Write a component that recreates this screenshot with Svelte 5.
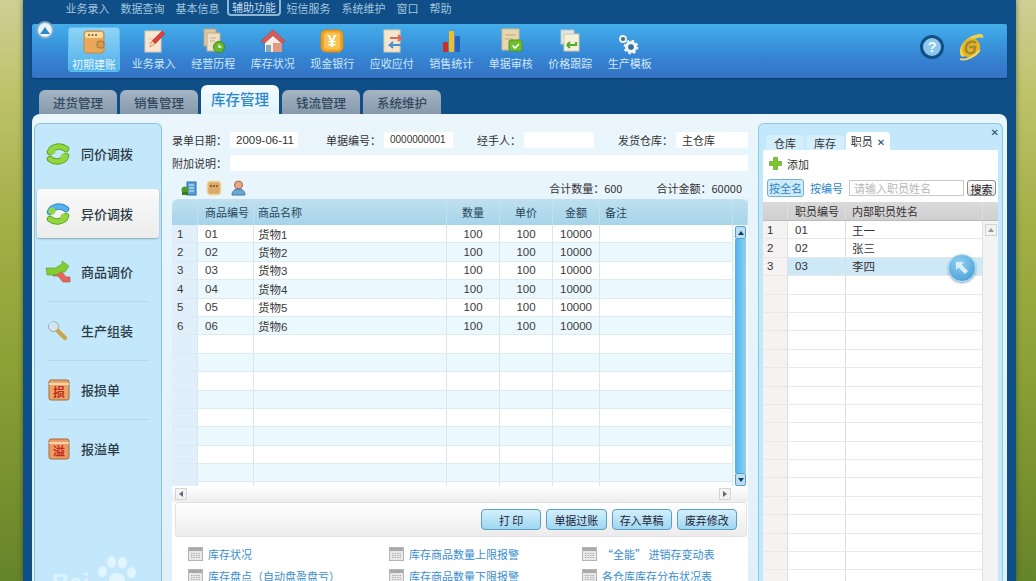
<script lang="ts">
  const menus = ['业务录入', '数据查询', '基本信息', '辅助功能', '短信服务', '系统维护', '窗口', '帮助'];
  const tools = [
    { label: '初期建账', icon: 'book' },
    { label: '业务录入', icon: 'pen' },
    { label: '经营历程', icon: 'clock' },
    { label: '库存状况', icon: 'house' },
    { label: '现金银行', icon: 'cash' },
    { label: '应收应付', icon: 'swap' },
    { label: '销售统计', icon: 'bars' },
    { label: '单据审核', icon: 'check' },
    { label: '价格跟踪', icon: 'track' },
    { label: '生产模板', icon: 'gears' }
  ];
  const tabs = ['进货管理', '销售管理', '库存管理', '钱流管理', '系统维护'];
  const navs = [
    { label: '同价调拨', icon: 'same' },
    { label: '异价调拨', icon: 'diff' },
    { label: '商品调价', icon: 'price' },
    { label: '生产组装', icon: 'wrench' },
    { label: '报损单', icon: 'loss' },
    { label: '报溢单', icon: 'over' }
  ];
  const goods = [1, 2, 3, 4, 5, 6].map((n) => ({ n, code: '0' + n, name: '货物' + n }));
  const blanks = Array.from({ length: 9 });
  const staff = [
    { n: 1, code: '01', name: '王一' },
    { n: 2, code: '02', name: '张三' },
    { n: 3, code: '03', name: '李四' }
  ];
  const staffBlanks = Array.from({ length: 17 });
  const actions = ['打 印', '单据过账', '存入草稿', '废弃修改'];
  const links = [
    ['库存状况', '库存盘点（自动盘盈盘亏）'],
    ['库存商品数量上限报警', '库存商品数量下限报警'],
    ['“全能” 进销存变动表', '各仓库库存分布状况表']
  ];
</script>

{#snippet toolIcon(name)}
  <svg width="30" height="28" viewBox="0 0 30 28">
    {#if name === 'book'}
      <rect x="5" y="3" width="20" height="22" rx="3" fill="#eaa85c" stroke="#c58a45" />
      <rect x="6" y="4" width="18" height="6" rx="2" fill="#fbdca0" />
      <circle cx="10" cy="7" r="1" fill="#7a5527" /><circle cx="13.500" cy="7" r="1" fill="#7a5527" /><circle cx="17" cy="7" r="1" fill="#7a5527" />
      <rect x="18" y="13" width="7" height="7" rx="2.500" fill="#d59a52" stroke="#a87232" />
    {:else if name === 'pen'}
      <rect x="6" y="4" width="16" height="21" fill="#f9e6d2" stroke="#e2caa8" />
      <path d="M9 12h8M9 16h5" stroke="#e0c4ae" />
      <path d="M11 20l2-6L23 4l3 3-10 10z" fill="#dc4438" stroke="#b02f26" stroke-width=".5" />
      <path d="M11 20l2-6 3 3z" fill="#f5d9a8" />
    {:else if name === 'clock'}
      <rect x="6" y="2" width="12" height="17" fill="#dcc8a4" stroke="#b9a583" />
      <rect x="9" y="6" width="13" height="18" fill="#efdfc4" stroke="#c4ad8a" />
      <path d="M12 11h6M12 14h5" stroke="#c7b08c" />
      <circle cx="21" cy="20" r="5.500" fill="#6ab832" stroke="#3f8a18" />
      <path d="M21 17.500V20h2.500" stroke="#eefbe0" stroke-width="1.300" fill="none" />
    {:else if name === 'house'}
      <path d="M15 3L3 14l3 2.500 9-8 9 8 3-2.500z" fill="#dd5a52" stroke="#b83d35" stroke-width=".6" />
      <path d="M7 16l8-7 8 7v9H7z" fill="#f7ece0" />
      <rect x="8" y="18" width="5" height="7" fill="#8fa6b8" />
      <rect x="15" y="16" width="9" height="9" fill="#e09a84" />
    {:else if name === 'cash'}
      <rect x="4" y="3" width="22" height="22" rx="5" fill="#f0a226" stroke="#d58a1a" />
      <rect x="7" y="5.500" width="16" height="17" rx="3" fill="#fac24f" />
      <text x="15" y="20" text-anchor="middle" class="svg-glyph" fill="#fff">¥</text>
    {:else if name === 'swap'}
      <rect x="7" y="3" width="16" height="22" fill="#f3e6cc" stroke="#ddcba6" />
      <path d="M13 11h11l-3-3M24 11l-3 3" stroke="#d9685c" stroke-width="2" fill="none" />
      <path d="M24 18H13l3-3M13 18l3 3" stroke="#4d8ed0" stroke-width="2" fill="none" />
    {:else if name === 'bars'}
      <rect x="7" y="15" width="5" height="10" rx="1" fill="#c9302a" />
      <rect x="13" y="4" width="5" height="21" rx="1" fill="#f2bd2c" />
      <rect x="19" y="9" width="5" height="16" rx="1" fill="#2b62b8" />
    {:else if name === 'check'}
      <rect x="6" y="2" width="17" height="21" fill="#e9d6ae" stroke="#cdb98e" />
      <path d="M9 8h11M9 12h8" stroke="#bda97f" />
      <rect x="13" y="13" width="13" height="11" rx="2" fill="#6fbf2c" stroke="#4c9a1c" />
      <path d="M16.500 18.500l2.500 2.500 4-4" stroke="#fff" stroke-width="1.600" fill="none" />
    {:else if name === 'track'}
      <rect x="6" y="3" width="13" height="14" fill="#dfe7e4" stroke="#b8c7c4" />
      <rect x="9" y="7" width="15" height="17" fill="#f3f0dc" stroke="#cfc8a8" />
      <path d="M21 15v3h-9M12 18l3-3M12 18l3 3" stroke="#57ad2c" stroke-width="2.200" fill="none" />
    {:else if name === 'gears'}
      <circle cx="8" cy="12" r="3" fill="#53697a" stroke="#eef2f5" stroke-width="1.800" />
      <circle cx="16" cy="20" r="4.400" fill="none" stroke="#f2f5f7" stroke-width="3.200" />
      <circle cx="16" cy="20" r="6.400" fill="none" stroke="#f2f5f7" stroke-width="2" stroke-dasharray="2.500 2.500" />
      <circle cx="16" cy="20" r="2.600" fill="#3f6c8c" />
    {/if}
  </svg>
{/snippet}

{#snippet navIcon(name)}
  <svg width="26" height="26" viewBox="0 0 26 26">
    {#if name === 'same' || name === 'diff'}
      <path d="M5 11C7 5 16 4 21 8" fill="none" stroke={name === 'diff' ? '#2f8ed2' : '#5aa821'} stroke-width="6.500" stroke-linecap="round" />
      <path d="M5 11C7 5 16 4 21 8" fill="none" stroke={name === 'diff' ? '#56b4ec' : '#93d640'} stroke-width="4.500" stroke-linecap="round" />
      <path d="M21 15C19 21 10 22 5 18" fill="none" stroke="#5aa821" stroke-width="6.500" stroke-linecap="round" />
      <path d="M21 15C19 21 10 22 5 18" fill="none" stroke="#93d640" stroke-width="4.500" stroke-linecap="round" />
      <circle cx="7" cy="10" r="3.500" fill="#93d640" />
      <circle cx="19" cy="16" r="3.500" fill="#93d640" />
    {:else if name === 'price'}
      <path d="M8 15h8l5 6h4v5h-7l-5-6H8z" transform="translate(0 -3)" fill="#e5675a" stroke="#b8443a" stroke-width=".6" />
      <path d="M1 9h9l7-4V2l7 5-4 6h-4l-5 3H2z" fill="#84cc33" stroke="#56a01b" stroke-width=".6" />
    {:else if name === 'wrench'}
      <path d="M11 11l9 9" stroke="#cca64e" stroke-width="4.500" stroke-linecap="round" />
      <circle cx="8.500" cy="8.500" r="5" fill="#dfe4e8" stroke="#98a4ae" />
      <path d="M7 3l3.500 4.500-2.500 2.500-4.500-3.500z" fill="#c4e8fb" />
    {:else}
      <rect x="4" y="3" width="20" height="20" rx="2" fill={name === 'loss' ? '#eca467' : '#ee9a63'} stroke="#a06a3a" />
      <path d="M4 7h20" stroke="#fbe6c5" stroke-width="1.500" />
      <text x="14" y="20" text-anchor="middle" class="svg-char" fill="#c02b1d">{name === 'loss' ? '损' : '溢'}</text>
    {/if}
  </svg>
{/snippet}

{#snippet calIcon()}
  <svg width="15" height="14" viewBox="0 0 15 14">
    <rect x=".5" y=".5" width="14" height="13" fill="#e8e8e8" stroke="#b5b5b5" />
    <rect x="1" y="1" width="13" height="3" fill="#a9a9a9" />
    <path d="M3 6.500h9M3 8.500h9M3 10.500h9" stroke="#b0b0b0" stroke-dasharray="1.500 1" />
  </svg>
{/snippet}

<div class="frame">
  <nav class="menu">
    {#each menus as m, i}
      <span class="menu-item" class:boxed={i === 3}>{m}</span>
    {/each}
  </nav>

  <div class="toolbar">
    <span class="collapse"><svg width="10" height="7" viewBox="0 0 10 7"><path d="M0 7l3-4 2-3 2 3 3 4z" fill="#2f87c8" /></svg></span>
    {#each tools as t, i}
      <div class="tool" class:on={i === 0}>
        {@render toolIcon(t.icon)}
        <span>{t.label}</span>
      </div>
    {/each}
    <div class="tool-right">
      <span class="help">?</span>
      <svg class="logo" width="28" height="30" viewBox="0 0 28 30">
        <path d="M4 24C0 16 8 4 22 2c4 0 5 2 4 4-5-2-14 2-17 9-1 3-1 6 1 8-2 2-5 2-6 1z" fill="#f0d24c" />
        <ellipse cx="14" cy="16" rx="9" ry="10" transform="rotate(25 14 16)" fill="#edb31c" />
        <path d="M19 11c-3-3-9-1-10 4s3 8 8 5l1-5h-6" fill="none" stroke="#9a8a3a" stroke-width="2.600" />
        <path d="M3 27c6 2 14-2 20-9" fill="none" stroke="#f3dc6c" stroke-width="1.800" />
      </svg>
    </div>
  </div>

  <div class="tabs">
    {#each tabs as t, i}
      <div class="tab" class:active={i === 2}>{t}</div>
    {/each}
  </div>

  <div class="content">
    <aside class="side">
      {#each navs as n, i}
        <div class="nav-item" class:line={i >= 2 && i <= 4}>
          <div class="nav-inner" class:active={i === 1}>
            {@render navIcon(n.icon)}
            <span>{n.label}</span>
          </div>
        </div>
      {/each}
    </aside>

    <main class="main">
      <div class="form-row first">
        <div class="field f1"><label>录单日期：</label><span class="input date">2009-06-11</span></div>
        <div class="field f2"><label>单据编号：</label><span class="input small">0000000001</span></div>
        <div class="field f3"><label>经手人：</label><span class="input"></span></div>
        <div class="field f4"><label>发货仓库：</label><span class="input">主仓库</span></div>
      </div>
      <div class="form-row second">
        <div class="field grow"><label>附加说明：</label><span class="input"></span></div>
      </div>
      <div class="form-row third">
        <svg width="16" height="16" viewBox="0 0 16 16">
          <rect x="6" y="2" width="9" height="13" fill="#5aa0d6" stroke="#2c6ea5" />
          <path d="M8 5h5M8 8h5M8 11h5" stroke="#d6ecfa" />
          <circle cx="4" cy="10" r="3.500" fill="#4d9a2c" /><rect x="1" y="12" width="6" height="3" fill="#3b7a20" />
        </svg>
        <svg width="16" height="16" viewBox="0 0 16 16">
          <rect x="1.500" y="1.500" width="13" height="13" rx="3" fill="#dca96c" stroke="#f0d18f" stroke-width="1.500" />
          <circle cx="5" cy="6" r="1" fill="#75501f" /><circle cx="8" cy="6" r="1" fill="#75501f" /><circle cx="11" cy="6" r="1" fill="#75501f" />
        </svg>
        <svg width="15" height="16" viewBox="0 0 15 16">
          <circle cx="7.500" cy="5" r="4" fill="#e5a98a" stroke="#b5623f" />
          <path d="M1 15c0-4 3-6 6.500-6s6.500 2 6.500 6z" fill="#6aa5d8" stroke="#3c78ad" />
        </svg>
        <span class="total t1">合计数量：600</span>
        <span class="total">合计金额：60000</span>
      </div>

      <div class="card">
        <div class="grid-head row">
          <span class="c-no"></span><span class="c-code">商品编号</span><span class="c-name">商品名称</span>
          <span class="c-num">数量</span><span class="c-price">单价</span><span class="c-amt">金额</span>
          <span class="c-note">备注</span><span class="c-bar"></span>
        </div>
        <div class="grid-wrap">
          <div class="grid-body">
            {#each goods as g}
              <div class="row line-row">
                <span class="c-no">{g.n}</span><span class="c-code">{g.code}</span><span class="c-name">{g.name}</span>
                <span class="c-num">100</span><span class="c-price">100</span><span class="c-amt">10000</span><span class="c-note"></span>
              </div>
            {/each}
            {#each blanks as _}
              <div class="row line-row">
                <span class="c-no"></span><span class="c-code"></span><span class="c-name"></span>
                <span class="c-num"></span><span class="c-price"></span><span class="c-amt"></span><span class="c-note"></span>
              </div>
            {/each}
          </div>
          <div class="vscroll">
            <span class="vbtn"><i class="tri up"></i></span>
            <span class="vthumb"></span>
            <span class="vbtn"><i class="tri down"></i></span>
          </div>
        </div>
        <div class="hscroll">
          <span class="hbtn"><i class="tri to-left"></i></span>
          <span class="hbtn"><i class="tri to-right"></i></span>
        </div>
        <div class="actions">
          {#each actions as a}
            <button class="act">{a}</button>
          {/each}
        </div>
        <div class="links">
          {#each links as col, i}
            <div class="link-col col{i}">
              {#each col as l}
                <div class="link">{@render calIcon()}<span>{l}</span></div>
              {/each}
            </div>
          {/each}
        </div>
      </div>
    </main>

    <section class="staff">
      <span class="staff-close">✕</span>
      <div class="rtabs">
        <span class="rtab">仓库</span>
        <span class="rtab">库存</span>
        <span class="rtab on">职员<b>✕</b></span>
      </div>
      <div class="rbody">
        <div class="add">
          <svg width="13" height="13" viewBox="0 0 13 13"><path d="M4.500 .5h4v4h4v4h-4v4h-4v-4h-4v-4h4z" fill="#7dc62e" stroke="#4f9a19" stroke-width=".6" /></svg>
          <span>添加</span>
        </div>
        <div class="search">
          <span class="by on">按全名</span>
          <span class="by">按编号</span>
          <span class="sinput">请输入职员姓名</span>
          <button class="sbtn">搜索</button>
        </div>
        <div class="rhead rrow">
          <span class="r-no"></span><span class="r-code">职员编号</span><span class="r-name">内部职员姓名</span>
        </div>
        <div class="rwrap">
          <div class="rlist">
            {#each staff as s, i}
              <div class="rrow item" class:sel={i === 2}>
                <span class="r-no">{s.n}</span><span class="r-code">{s.code}</span><span class="r-name">{s.name}</span>
              </div>
            {/each}
            {#each staffBlanks as _}
              <div class="rrow item">
                <span class="r-no"></span><span class="r-code"></span><span class="r-name"></span>
              </div>
            {/each}
          </div>
          <div class="rscroll"><span class="hbtn"><i class="tri up gray"></i></span></div>
        </div>
      </div>
      <span class="float-btn">
        <svg width="16" height="16" viewBox="0 0 16 16"><path d="M2 2h8L7.500 4.500 14 11l-3 3-6.500-6.500L2 10z" fill="#d9effb" /></svg>
      </span>
    </section>
  </div>
</div>

<div class="watermark" aria-hidden="true">
  <span class="wm-text">Bai</span>
  <i class="paw p1"></i><i class="paw p2"></i><i class="paw p3"></i><i class="paw p4"></i><i class="paw p5"></i>
</div>

<style>
  :global(html), :global(body) {
    margin: 0;
    height: 581px;
    overflow: hidden;
  }
  :global(body) {
    background: linear-gradient(#cfcf95 0, #bfc36b 90px, #a3b048 220px, #8a9f35 380px, #66842a 581px);
  }

  .frame {
    box-sizing: border-box;
    width: 993px;
    height: 581px;
    margin-left: 23px;
    padding: 0 9px;
    overflow: hidden;
    background: #0f4e86;
    box-shadow: 0 0 5px rgba(30, 50, 30, 0.55);
    font-family: "Noto Sans CJK SC", "Liberation Sans", sans-serif;
    font-size: 11px;
    color: #333;
  }

  .menu {
    display: flex;
    align-items: center;
    height: 24px;
    padding: 0 0 9px 28px;
    box-sizing: border-box;
    color: #a3c6df;
    font-size: 11px;
  }
  .menu-item {
    padding: 0 5.500px;
    white-space: nowrap;
  }
  .menu-item.boxed {
    margin: 0 0 0 2px;
    padding: 0 3px;
    height: 17px;
    line-height: 16px;
    border: 2px solid #8fb7d3;
    border-top: none;
    border-radius: 0 0 4px 4px;
    box-sizing: border-box;
    color: #c2dbec;
  }

  .toolbar {
    position: relative;
    display: flex;
    height: 54px;
    padding-left: 32px;
    border-radius: 2px;
    background: linear-gradient(#45ade9 0, #3b9ae0 30%, #3582d1 65%, #3573c4 100%);
    box-shadow: 0 1px 1px #0a3a68;
  }
  .collapse {
    position: absolute;
    left: 4px;
    top: -3px;
    width: 18px;
    height: 18px;
    display: flex;
    align-items: center;
    justify-content: center;
    border-radius: 50%;
    background: #e8f2f9;
    border: 2px solid #7ea9c9;
    box-sizing: border-box;
  }
  .tool {
    box-sizing: border-box;
    width: 59.500px;
    display: flex;
    flex-direction: column;
    align-items: center;
    padding-top: 3px;
    color: #cfe7f8;
    white-space: nowrap;
  }
  .tool span {
    margin-top: 1px;
    line-height: 14px;
  }
  .tool.on {
    width: 52px;
    margin: 3px 4px -3px 4px;
    height: 45px;
    padding-top: 0;
    border-radius: 3px;
    background: linear-gradient(#8fd3f5, #4fb0ea);
    border: 1px solid #5cc1f0;
    color: #e8f6fe;
  }
  .tool-right {
    margin-left: auto;
    padding-right: 22px;
    display: flex;
    align-items: center;
    gap: 13px;
    height: 46px;
  }
  .help {
    width: 24px;
    height: 24px;
    box-sizing: border-box;
    border-radius: 50%;
    border: 3px solid #134d86;
    background: #8cc8ee;
    color: #f3f9fd;
    font: bold 15px/18px "Liberation Sans", sans-serif;
    text-align: center;
  }

  .tabs {
    display: flex;
    align-items: flex-end;
    gap: 3px;
    height: 36px;
    padding-left: 7px;
  }
  .tab {
    width: 78px;
    height: 24px;
    line-height: 25px;
    text-align: center;
    border-radius: 6px 6px 0 0;
    background: linear-gradient(#a4b5c4, #8699ab);
    color: #314a60;
    font-size: 12.500px;
    font-weight: 500;
  }
  .tab.active {
    height: 29px;
    line-height: 27px;
    background: linear-gradient(#f3fbff, #e4f4fc);
    color: #2c86cc;
    font-size: 14.500px;
  }

  .content {
    display: flex;
    height: 480px;
    padding: 9px 4px 0 2px;
    border-radius: 8px 8px 0 0;
    background: linear-gradient(#eaf6fc, #e0f0fb);
    box-sizing: border-box;
  }

  .side {
    box-sizing: border-box;
    flex: none;
    width: 128px;
    border: 1px solid #86c3da;
    border-bottom: none;
    border-radius: 6px 6px 0 0;
    background: #c4e8fb;
  }
  .nav-item {
    position: relative;
    height: 59px;
    padding: 4px 2px;
    box-sizing: border-box;
  }
  .nav-item.line::after {
    content: "";
    position: absolute;
    left: 12px;
    right: 12px;
    bottom: -1px;
    height: 1px;
    background: #b3d9ec;
  }
  .nav-inner {
    display: flex;
    align-items: center;
    height: 51px;
    padding-left: 8px;
    gap: 10px;
    font-size: 13px;
    font-weight: 500;
    color: #2c3a44;
    border-radius: 3px;
  }
  .nav-inner.active {
    margin-top: 2px;
    height: 49px;
    background: linear-gradient(#fafafa, #ececec);
    box-shadow: 0 1px 2px rgba(70, 110, 130, 0.5);
  }
  .svg-char {
    font: bold 12px "Noto Sans CJK SC", sans-serif;
  }
  .svg-glyph {
    font: bold 16px "Liberation Sans", sans-serif;
  }

  .main {
    flex: none;
    width: 576px;
    margin: 0 10px 0 10px;
  }
  .form-row {
    display: flex;
    align-items: center;
  }
  .form-row.first {
    margin-top: 9px;
    gap: 24px;
  }
  .form-row.second {
    margin-top: 7px;
  }
  .form-row.third {
    margin-top: 9px;
    height: 16px;
    padding-left: 9px;
    gap: 9px;
  }
  .field {
    display: flex;
    align-items: center;
    gap: 3px;
    white-space: nowrap;
  }
  .field label {
    flex: none;
  }
  .input {
    display: block;
    flex: 1;
    box-sizing: border-box;
    height: 16px;
    line-height: 16px;
    padding-left: 6px;
    background: #fff;
    border-radius: 1px;
  }
  .input.date {
    font: 11.500px/16px "Liberation Sans", sans-serif;
  }
  .input.small {
    font: 10px/16px "Liberation Sans", sans-serif;
  }
  .f1 { width: 126px; margin-right: 4px; }
  .f2 { width: 127px; }
  .f3 { width: 117px; }
  .f4 { width: 130px; }
  .grow { width: 100%; }
  .total {
    margin-left: 25px;
    padding-right: 6px;
  }
  .total.t1 {
    margin-left: auto;
    padding-right: 0;
  }

  .card {
    margin-top: 3px;
    background: #fff;
    border-radius: 6px 6px 0 0;
  }
  .row {
    display: flex;
    align-items: center;
  }
  .row > span {
    box-sizing: border-box;
    height: 100%;
    display: flex;
    align-items: center;
    border-right: 1px solid #d4e8f1;
  }
  .c-no { width: 26px; padding-left: 5px; }
  .c-code { width: 56px; padding-left: 7px; }
  .c-name { width: 193px; padding-left: 4px; }
  .c-num { width: 53px; justify-content: center; }
  .c-price { width: 53px; justify-content: center; }
  .c-amt { width: 47px; justify-content: center; }
  .c-note { width: 133px; padding-left: 5px; }
  .c-bar { width: 15px; }

  .grid-head {
    height: 26px;
    border-radius: 6px 6px 0 0;
    background: linear-gradient(#bfe0f0, #a6d4e9);
    color: #274658;
  }
  .grid-head > span {
    border-right-color: #c4e0ee;
  }
  .grid-wrap {
    display: flex;
    height: 261px;
    overflow: hidden;
  }
  .grid-body {
    width: 561px;
    flex: none;
  }
  .line-row {
    height: 18.400px;
    border-bottom: 1px solid #dcebf2;
    box-sizing: border-box;
    font-family: "Liberation Sans", "Noto Sans CJK SC", sans-serif;
    font-size: 11.500px;
    color: #3a3a3a;
  }
  .line-row:nth-child(even) {
    background: #ebf8fd;
  }
  .line-row .c-no {
    background: #e0effa;
  }
  .vscroll {
    flex: 1;
    display: flex;
    flex-direction: column;
    align-items: center;
    padding-top: 1px;
    background: #f8f8f8;
  }
  .vbtn {
    box-sizing: border-box;
    width: 11px;
    height: 13px;
    display: flex;
    align-items: center;
    justify-content: center;
    background: #b9def2;
    border: 1px solid #5a9fc7;
    border-radius: 2px;
  }
  .vthumb {
    flex: 1;
    width: 11px;
    background: linear-gradient(90deg, #52b1ea, #8bd0f5);
  }
  .tri {
    display: block;
    width: 0;
    height: 0;
    border: 3.500px solid transparent;
  }
  .tri.up { border-bottom: 4px solid #173a55; border-top: none; }
  .tri.down { border-top: 4px solid #173a55; border-bottom: none; }
  .tri.to-left { border-right: 4px solid #667; border-left: none; }
  .tri.to-right { border-left: 4px solid #667; border-right: none; }
  .tri.gray { border-bottom-color: #999; }

  .hscroll {
    box-sizing: border-box;
    display: flex;
    justify-content: space-between;
    align-items: center;
    height: 16px;
    padding: 0 17px 0 3px;
    background: linear-gradient(#fff, #eee);
  }
  .hbtn {
    box-sizing: border-box;
    display: flex;
    width: 12px;
    height: 12px;
    align-items: center;
    justify-content: center;
    background: #f2f2f2;
    border: 1px solid #d4d4d4;
  }
  .actions {
    box-sizing: border-box;
    display: flex;
    justify-content: flex-end;
    align-items: center;
    gap: 5px;
    height: 35px;
    margin: 0 1px 0 3px;
    padding-right: 9px;
    background: linear-gradient(#fff, #ececec);
    border: 1px solid #e1e1e1;
    border-radius: 3px;
  }
  .act {
    width: 60.250px;
    height: 21px;
    padding: 0;
    border: 1px solid #5b9ebf;
    border-radius: 4px;
    background: linear-gradient(#d3effb, #9fd7f2);
    font: 11px "Noto Sans CJK SC", sans-serif;
    color: #223;
  }
  .links {
    display: flex;
    padding: 9px 0 0 16px;
  }
  .link-col { display: flex; flex-direction: column; gap: 6px; }
  .col0 { width: 201px; }
  .col1 { width: 193px; }
  .link {
    display: flex;
    align-items: center;
    gap: 5px;
    height: 16px;
    color: #3b8ed0;
    white-space: nowrap;
  }

  .staff {
    position: relative;
    flex: none;
    box-sizing: border-box;
    width: 245px;
    padding: 8px 4px 0 4px;
    border: 1px solid #8ccbe0;
    border-bottom: none;
    border-radius: 6px 6px 0 0;
    background: #c4e8fb;
  }
  .staff-close {
    position: absolute;
    right: 3px;
    top: 3px;
    color: #17476d;
    font: bold 10px "DejaVu Sans", sans-serif;
  }
  .rtabs {
    display: flex;
    align-items: flex-end;
    gap: 2px;
    height: 18px;
    padding-left: 3px;
  }
  .rtab {
    width: 38px;
    height: 15px;
    line-height: 16px;
    text-align: center;
    border-radius: 4px 4px 0 0;
    background: #d4eefb;
    color: #333;
  }
  .rtab.on {
    width: 44px;
    height: 18px;
    line-height: 19px;
    background: #fff;
  }
  .rtab b {
    margin-left: 4px;
    font: bold 10px "DejaVu Sans", sans-serif;
    color: #17476d;
  }
  .rbody {
    background: #fff;
    height: 440px;
    overflow: hidden;
  }
  .add {
    display: flex;
    align-items: center;
    gap: 5px;
    height: 24px;
    padding-left: 6px;
    padding-top: 3px;
    box-sizing: border-box;
  }
  .search {
    display: flex;
    align-items: center;
    height: 28px;
    padding-left: 4px;
    gap: 5px;
  }
  .by {
    color: #2f86c6;
    white-space: nowrap;
    padding: 0 1px;
  }
  .by.on {
    border: 1px solid #6eb3d8;
    border-radius: 3px;
    background: #cfeaf8;
  }
  .sinput {
    box-sizing: border-box;
    width: 115px;
    height: 16px;
    line-height: 15px;
    padding-left: 4px;
    border: 1px solid #c9c9c9;
    color: #b8b8b8;
  }
  .sbtn {
    width: 29px;
    height: 16px;
    margin-left: -2px;
    padding: 0;
    border: 1px solid #8b8b8b;
    border-radius: 3px;
    background: linear-gradient(#fff, #e1e1e1);
    font: 11px "Noto Sans CJK SC", sans-serif;
    color: #222;
  }
  .rrow {
    display: flex;
    align-items: center;
  }
  .rrow > span {
    box-sizing: border-box;
    height: 100%;
    display: flex;
    align-items: center;
    border-right: 1px solid #dedede;
  }
  .r-no { width: 25px; padding-left: 4px; background: #f5f2f2; }
  .r-code { width: 58px; padding-left: 7px; }
  .r-name { width: 137px; padding-left: 6px; }
  .rhead {
    height: 19px;
    background: linear-gradient(#dadada, #cfcfcf);
    border-bottom: 1px solid #bbb;
    box-sizing: border-box;
  }
  .rhead .r-no { background: none; }
  .rwrap {
    display: flex;
  }
  .rlist {
    width: 220px;
    flex: none;
  }
  .item {
    height: 18.400px;
    box-sizing: border-box;
    border-bottom: 1px solid #e8e8e8;
    font-family: "Liberation Sans", "Noto Sans CJK SC", sans-serif;
    font-size: 11.500px;
  }
  .item.sel .r-code, .item.sel .r-name {
    background: #cde8f6;
  }
  .rscroll {
    flex: 1;
    padding: 3px 2px;
    background: #f3f3f3;
  }
  .float-btn {
    position: absolute;
    left: 189px;
    top: 130px;
    box-sizing: border-box;
    width: 28px;
    height: 28px;
    display: flex;
    align-items: center;
    justify-content: center;
    border-radius: 50%;
    border: 1px solid #a9d8ef;
    background: radial-gradient(circle at 40% 30%, #8fd0f2, #3d97d2);
    box-shadow: 0 1px 2px rgba(20, 70, 110, 0.5);
  }

  .watermark {
    position: fixed;
    left: 50px;
    bottom: 0;
    width: 90px;
    height: 28px;
    overflow: hidden;
    pointer-events: none;
  }
  .wm-text {
    position: absolute;
    left: 2px;
    top: 16px;
    font: bold 24px "Liberation Sans", sans-serif;
    color: rgba(255, 255, 255, 0.45);
  }
  .paw {
    position: absolute;
    border-radius: 50%;
    background: rgba(255, 255, 255, 0.5);
  }
  .p1 { left: 48px; top: 13px; width: 9px; height: 11px; }
  .p2 { left: 57px; top: 3px; width: 9px; height: 12px; }
  .p3 { left: 68px; top: 4px; width: 9px; height: 12px; }
  .p4 { left: 77px; top: 14px; width: 9px; height: 11px; }
  .p5 { left: 59px; top: 20px; width: 16px; height: 14px; }
</style>
